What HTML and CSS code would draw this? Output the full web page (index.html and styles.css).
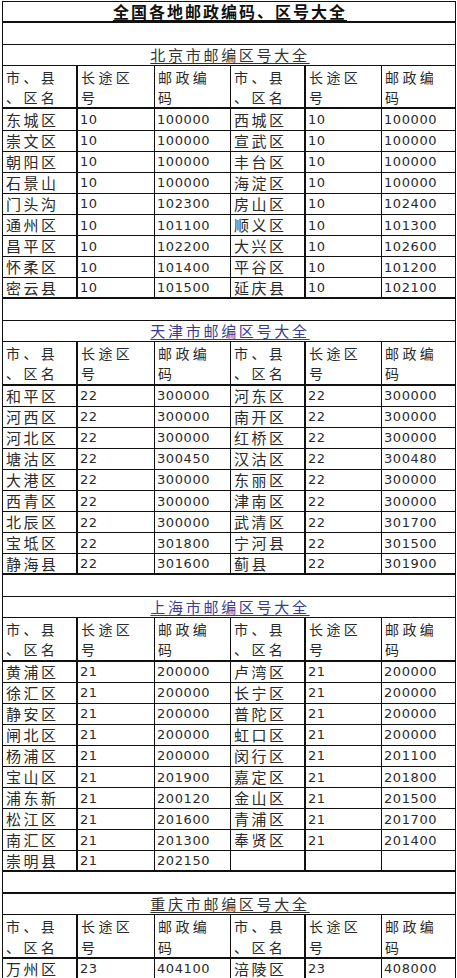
FILE: index.html
```html
<!DOCTYPE html>
<html lang="zh-CN">
<head>
<meta charset="utf-8">
<title>全国各地邮政编码、区号大全</title>
<link rel="stylesheet" href="styles.css">
</head>
<body>
<div class="sheet">
  <div class="row r-single r-thick"><div class="cell full main-title"><span>全国各地邮政编码、区号大全</span></div></div>
  <div class="row r-single"><div class="cell full"></div></div>

  <div class="row r-single"><div class="cell full sec-title"><span>北京市邮编区号大全</span></div></div>
  <div class="row r-head r-thick">
    <div class="cell c1 name">市、县<br>、区名</div><div class="cell c2 name">长途区<br>号</div><div class="cell c3 name">邮政编<br>码</div>
    <div class="cell c4 name">市、县<br>、区名</div><div class="cell c5 name">长途区<br>号</div><div class="cell c6 name">邮政编<br>码</div>
  </div>
  <div class="row r-data"><div class="cell c1 name">东城区</div><div class="cell c2 num">10</div><div class="cell c3 num">100000</div><div class="cell c4 name">西城区</div><div class="cell c5 num">10</div><div class="cell c6 num">100000</div></div>
  <div class="row r-data"><div class="cell c1 name">崇文区</div><div class="cell c2 num">10</div><div class="cell c3 num">100000</div><div class="cell c4 name">宣武区</div><div class="cell c5 num">10</div><div class="cell c6 num">100000</div></div>
  <div class="row r-data"><div class="cell c1 name">朝阳区</div><div class="cell c2 num">10</div><div class="cell c3 num">100000</div><div class="cell c4 name">丰台区</div><div class="cell c5 num">10</div><div class="cell c6 num">100000</div></div>
  <div class="row r-data"><div class="cell c1 name">石景山</div><div class="cell c2 num">10</div><div class="cell c3 num">100000</div><div class="cell c4 name">海淀区</div><div class="cell c5 num">10</div><div class="cell c6 num">100000</div></div>
  <div class="row r-data"><div class="cell c1 name">门头沟</div><div class="cell c2 num">10</div><div class="cell c3 num">102300</div><div class="cell c4 name">房山区</div><div class="cell c5 num">10</div><div class="cell c6 num">102400</div></div>
  <div class="row r-data"><div class="cell c1 name">通州区</div><div class="cell c2 num">10</div><div class="cell c3 num">101100</div><div class="cell c4 name">顺义区</div><div class="cell c5 num">10</div><div class="cell c6 num">101300</div></div>
  <div class="row r-data"><div class="cell c1 name">昌平区</div><div class="cell c2 num">10</div><div class="cell c3 num">102200</div><div class="cell c4 name">大兴区</div><div class="cell c5 num">10</div><div class="cell c6 num">102600</div></div>
  <div class="row r-data"><div class="cell c1 name">怀柔区</div><div class="cell c2 num">10</div><div class="cell c3 num">101400</div><div class="cell c4 name">平谷区</div><div class="cell c5 num">10</div><div class="cell c6 num">101200</div></div>
  <div class="row r-data r-thick"><div class="cell c1 name">密云县</div><div class="cell c2 num">10</div><div class="cell c3 num">101500</div><div class="cell c4 name">延庆县</div><div class="cell c5 num">10</div><div class="cell c6 num">102100</div></div>
  <div class="row r-single"><div class="cell full"></div></div>

  <div class="row r-single"><div class="cell full sec-title blue"><span>天津市邮编区号大全</span></div></div>
  <div class="row r-head r-thick">
    <div class="cell c1 name">市、县<br>、区名</div><div class="cell c2 name">长途区<br>号</div><div class="cell c3 name">邮政编<br>码</div>
    <div class="cell c4 name">市、县<br>、区名</div><div class="cell c5 name">长途区<br>号</div><div class="cell c6 name">邮政编<br>码</div>
  </div>
  <div class="row r-data"><div class="cell c1 name">和平区</div><div class="cell c2 num">22</div><div class="cell c3 num">300000</div><div class="cell c4 name">河东区</div><div class="cell c5 num">22</div><div class="cell c6 num">300000</div></div>
  <div class="row r-data"><div class="cell c1 name">河西区</div><div class="cell c2 num">22</div><div class="cell c3 num">300000</div><div class="cell c4 name">南开区</div><div class="cell c5 num">22</div><div class="cell c6 num">300000</div></div>
  <div class="row r-data"><div class="cell c1 name">河北区</div><div class="cell c2 num">22</div><div class="cell c3 num">300000</div><div class="cell c4 name">红桥区</div><div class="cell c5 num">22</div><div class="cell c6 num">300000</div></div>
  <div class="row r-data"><div class="cell c1 name">塘沽区</div><div class="cell c2 num">22</div><div class="cell c3 num">300450</div><div class="cell c4 name">汉沽区</div><div class="cell c5 num">22</div><div class="cell c6 num">300480</div></div>
  <div class="row r-data"><div class="cell c1 name">大港区</div><div class="cell c2 num">22</div><div class="cell c3 num">300000</div><div class="cell c4 name">东丽区</div><div class="cell c5 num">22</div><div class="cell c6 num">300000</div></div>
  <div class="row r-data"><div class="cell c1 name">西青区</div><div class="cell c2 num">22</div><div class="cell c3 num">300000</div><div class="cell c4 name">津南区</div><div class="cell c5 num">22</div><div class="cell c6 num">300000</div></div>
  <div class="row r-data"><div class="cell c1 name">北辰区</div><div class="cell c2 num">22</div><div class="cell c3 num">300000</div><div class="cell c4 name">武清区</div><div class="cell c5 num">22</div><div class="cell c6 num">301700</div></div>
  <div class="row r-data"><div class="cell c1 name">宝坻区</div><div class="cell c2 num">22</div><div class="cell c3 num">301800</div><div class="cell c4 name">宁河县</div><div class="cell c5 num">22</div><div class="cell c6 num">301500</div></div>
  <div class="row r-data r-thick"><div class="cell c1 name">静海县</div><div class="cell c2 num">22</div><div class="cell c3 num">301600</div><div class="cell c4 name">蓟县</div><div class="cell c5 num">22</div><div class="cell c6 num">301900</div></div>
  <div class="row r-single"><div class="cell full"></div></div>

  <div class="row r-single"><div class="cell full sec-title blue"><span>上海市邮编区号大全</span></div></div>
  <div class="row r-head r-thick">
    <div class="cell c1 name">市、县<br>、区名</div><div class="cell c2 name">长途区<br>号</div><div class="cell c3 name">邮政编<br>码</div>
    <div class="cell c4 name">市、县<br>、区名</div><div class="cell c5 name">长途区<br>号</div><div class="cell c6 name">邮政编<br>码</div>
  </div>
  <div class="row r-data"><div class="cell c1 name">黄浦区</div><div class="cell c2 num">21</div><div class="cell c3 num">200000</div><div class="cell c4 name">卢湾区</div><div class="cell c5 num">21</div><div class="cell c6 num">200000</div></div>
  <div class="row r-data"><div class="cell c1 name">徐汇区</div><div class="cell c2 num">21</div><div class="cell c3 num">200000</div><div class="cell c4 name">长宁区</div><div class="cell c5 num">21</div><div class="cell c6 num">200000</div></div>
  <div class="row r-data"><div class="cell c1 name">静安区</div><div class="cell c2 num">21</div><div class="cell c3 num">200000</div><div class="cell c4 name">普陀区</div><div class="cell c5 num">21</div><div class="cell c6 num">200000</div></div>
  <div class="row r-data"><div class="cell c1 name">闸北区</div><div class="cell c2 num">21</div><div class="cell c3 num">200000</div><div class="cell c4 name">虹口区</div><div class="cell c5 num">21</div><div class="cell c6 num">200000</div></div>
  <div class="row r-data"><div class="cell c1 name">杨浦区</div><div class="cell c2 num">21</div><div class="cell c3 num">200000</div><div class="cell c4 name">闵行区</div><div class="cell c5 num">21</div><div class="cell c6 num">201100</div></div>
  <div class="row r-data"><div class="cell c1 name">宝山区</div><div class="cell c2 num">21</div><div class="cell c3 num">201900</div><div class="cell c4 name">嘉定区</div><div class="cell c5 num">21</div><div class="cell c6 num">201800</div></div>
  <div class="row r-data"><div class="cell c1 name">浦东新</div><div class="cell c2 num">21</div><div class="cell c3 num">200120</div><div class="cell c4 name">金山区</div><div class="cell c5 num">21</div><div class="cell c6 num">201500</div></div>
  <div class="row r-data"><div class="cell c1 name">松江区</div><div class="cell c2 num">21</div><div class="cell c3 num">201600</div><div class="cell c4 name">青浦区</div><div class="cell c5 num">21</div><div class="cell c6 num">201700</div></div>
  <div class="row r-data"><div class="cell c1 name">南汇区</div><div class="cell c2 num">21</div><div class="cell c3 num">201300</div><div class="cell c4 name">奉贤区</div><div class="cell c5 num">21</div><div class="cell c6 num">201400</div></div>
  <div class="row r-data r-thick"><div class="cell c1 name">崇明县</div><div class="cell c2 num">21</div><div class="cell c3 num">202150</div><div class="cell c4 name"></div><div class="cell c5 num"></div><div class="cell c6 num"></div></div>
  <div class="row r-single r-thick"><div class="cell full"></div></div>

  <div class="row r-single"><div class="cell full sec-title"><span>重庆市邮编区号大全</span></div></div>
  <div class="row r-head r-thick">
    <div class="cell c1 name">市、县<br>、区名</div><div class="cell c2 name">长途区<br>号</div><div class="cell c3 name">邮政编<br>码</div>
    <div class="cell c4 name">市、县<br>、区名</div><div class="cell c5 name">长途区<br>号</div><div class="cell c6 name">邮政编<br>码</div>
  </div>
  <div class="row r-data"><div class="cell c1 name">万州区</div><div class="cell c2 num">23</div><div class="cell c3 num">404100</div><div class="cell c4 name">涪陵区</div><div class="cell c5 num">23</div><div class="cell c6 num">408000</div></div>
</div>
</body>
</html>
```

FILE: styles.css
```css
* { box-sizing: border-box; }

html, body {
  margin: 0;
  padding: 0;
  background: #ffffff;
}

body {
  overflow: hidden;
  color: #222222;
  font-family: "DejaVu Sans", "Noto Sans CJK SC", sans-serif;
}

.sheet {
  margin: 1px 0 0 2px;
  width: 454px;
  border-left: 1px solid #111111;
  border-top: 1px solid #111111;
}

.row {
  display: grid;
  grid-template-columns: 75px 77px 76px 75px 76px 74px;
  border-bottom: 1px solid #111111;
}

.r-single { height: 21.3px; }
.r-head { height: 43.6px; }
.r-data { height: 21.1px; }
.r-thick { border-bottom-width: 2px; }

.cell {
  border-right: 1px solid #111111;
  padding-left: 3px;
  white-space: nowrap;
  display: flex;
  align-items: center;
}

.c1, .c4 { border-right-width: 2px; }

.full {
  grid-column: 1 / -1;
  justify-content: center;
  padding-left: 0;
}

.main-title {
  font-family: "Noto Sans CJK SC", sans-serif;
  font-weight: 700;
  font-size: 16px;
  letter-spacing: 2px;
  color: #111111;
  line-height: 19px;
  padding-bottom: 1px;
}

.main-title span,
.sec-title span {
  text-decoration: underline;
  text-underline-offset: 2px;
  text-decoration-thickness: 1px;
  margin-right: -2px;
}

.sec-title {
  font-family: "Noto Sans CJK SC", sans-serif;
  font-size: 15px;
  letter-spacing: 2.7px;
  color: #333333;
  line-height: 18px;
  align-items: flex-end;
  padding-bottom: 1px;
}

.sec-title.blue { color: #3b3b96; }

.name {
  font-family: "Noto Sans CJK SC", sans-serif;
  font-size: 15px;
  letter-spacing: 2.5px;
  line-height: 18px;
  color: #2a2a2a;
}

.r-head .cell {
  align-items: flex-start;
  padding-top: 1px;
  font-size: 14px;
  letter-spacing: 3.4px;
  line-height: 20.5px;
}

.num {
  font-family: "DejaVu Sans", sans-serif;
  font-size: 13px;
  letter-spacing: 0.6px;
  color: #2a2a2a;
  padding-left: 2px;
}
```
